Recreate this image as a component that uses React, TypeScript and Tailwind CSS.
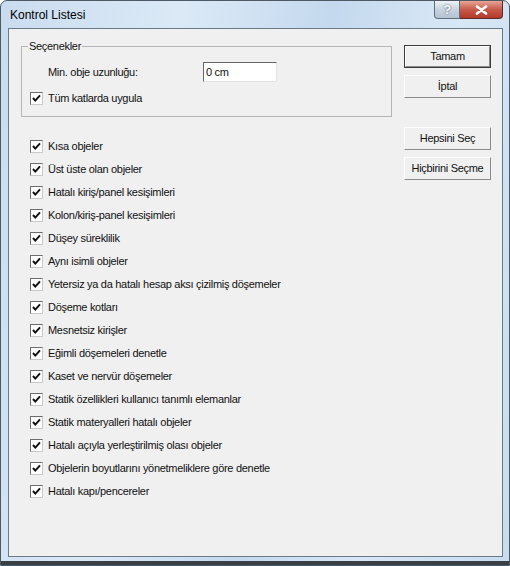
import React from "react";

const items = [
  "Kısa objeler",
  "Üst üste olan objeler",
  "Hatalı kiriş/panel kesişimleri",
  "Kolon/kiriş-panel kesişimleri",
  "Düşey süreklilik",
  "Aynı isimli objeler",
  "Yetersiz ya da hatalı hesap aksı çizilmiş döşemeler",
  "Döşeme kotları",
  "Mesnetsiz kirişler",
  "Eğimli döşemeleri denetle",
  "Kaset ve nervür döşemeler",
  "Statik özellikleri kullanıcı tanımlı elemanlar",
  "Statik materyalleri hatalı objeler",
  "Hatalı açıyla yerleştirilmiş olası objeler",
  "Objelerin boyutlarını yönetmeliklere göre denetle",
  "Hatalı kapı/pencereler",
];

function CheckBox() {
  return (
    <span className="flex h-[13px] w-[13px] shrink-0 items-center justify-center border border-t-[#6d6d6d] border-l-[#6d6d6d] border-r-[#c9c9c9] border-b-[#c9c9c9] bg-white">
      <svg width="9" height="9" viewBox="0 0 9 9">
        <path d="M1 4 L3.3 6.6 L8 1.3" stroke="#111" strokeWidth="2" fill="none" />
      </svg>
    </span>
  );
}

function Btn({ label, def }: { label: string; def?: boolean }) {
  return (
    <div
      className={
        "flex h-[23px] w-[87px] items-center justify-center bg-[#f0f0f0] " +
        (def ? "border border-[#3c3c3c]" : "")
      }
    >
      <div className="flex h-full w-full items-center justify-center border border-t-white border-l-white border-r-[#8a8a8a] border-b-[#8a8a8a]">
        {label}
      </div>
    </div>
  );
}

export default function App() {
  return (
    <div
      className="relative h-[566px] w-[510px] overflow-hidden bg-white text-[11px] tracking-[-0.3px] text-[#111]"
      style={{ fontFamily: '"Liberation Sans", Arial, sans-serif' }}
    >
      <div className="flex h-[566px] w-[510px] flex-col rounded-t-[7px] border border-[#4d5a66] bg-[linear-gradient(100deg,#c9dcef_0%,#dbe9f6_30%,#c4d9ee_55%,#d8e7f5_75%,#c8dcf0_100%)]">
        {/* title bar */}
        <div className="flex h-[27px] shrink-0 items-start justify-between">
          <span className="ml-[9px] mt-[6px] text-[12px] leading-[16px] tracking-normal text-black">
            Kontrol Listesi
          </span>
          <div className="mr-[6px] flex">
            <div className="flex h-[18px] w-[26px] items-center justify-center rounded-bl-[4px] border border-t-0 border-[#5f6f80] bg-[linear-gradient(#eef2f6,#c7d3df_50%,#b5c3d1)] text-[13px] font-bold text-[#f8f8f8] [text-shadow:0_0_2px_#44505c]">
              ?
            </div>
            <div className="flex h-[18px] w-[43px] items-center justify-center rounded-br-[4px] border border-t-0 border-l-0 border-[#5a2c2c] bg-[linear-gradient(#e6a596,#c85a4a_50%,#b33a2a)]">
              <svg width="13" height="10" viewBox="0 0 13 10">
                <path d="M2 1.5 L11 8.5 M11 1.5 L2 8.5" stroke="#fff" strokeWidth="2.6" strokeLinecap="round" />
              </svg>
            </div>
          </div>
        </div>

        {/* client area */}
        <div className="ml-[7px] flex h-[529px] w-[495px] shrink-0 border border-[#6c7a88] bg-[#f0f0f0]">
          <div className="ml-[12px] flex w-[371px] flex-col">
            <fieldset className="mt-[10px] border border-[#b5b5b5] pb-[11px]">
              <legend className="ml-[6px] px-[1px] leading-[14px]">Seçenekler</legend>
              <div className="mt-[9px] flex h-[20px] items-center">
                <span className="ml-[26px] w-[155px]">Min. obje uzunluğu:</span>
                <div className="flex h-[20px] w-[74px] items-center border border-t-[#646464] border-l-[#646464] border-r-[#e3e3e3] border-b-[#e3e3e3] bg-white pl-[2px]">
                  0 cm
                </div>
              </div>
              <div className="mt-[10px] flex h-[13px] items-center gap-[5px] pl-[8px]">
                <CheckBox />
                <span>Tüm katlarda uygula</span>
              </div>
            </fieldset>

            <div className="mt-[18px] flex flex-col pl-[9px]">
              {items.map((t) => (
                <div key={t} className="flex h-[23px] items-center gap-[5px]">
                  <CheckBox />
                  <span>{t}</span>
                </div>
              ))}
            </div>
          </div>

          <div className="ml-[12px] mt-[16px] flex flex-col">
            <Btn label="Tamam" def />
            <div className="mt-[7px]">
              <Btn label="İptal" />
            </div>
            <div className="mt-[29px]">
              <Btn label="Hepsini Seç" />
            </div>
            <div className="mt-[7px]">
              <Btn label="Hiçbirini Seçme" />
            </div>
          </div>
        </div>

        <div className="flex-1" />
        <div className="h-[4px] bg-[#3a3f45]" />
      </div>
    </div>
  );
}
